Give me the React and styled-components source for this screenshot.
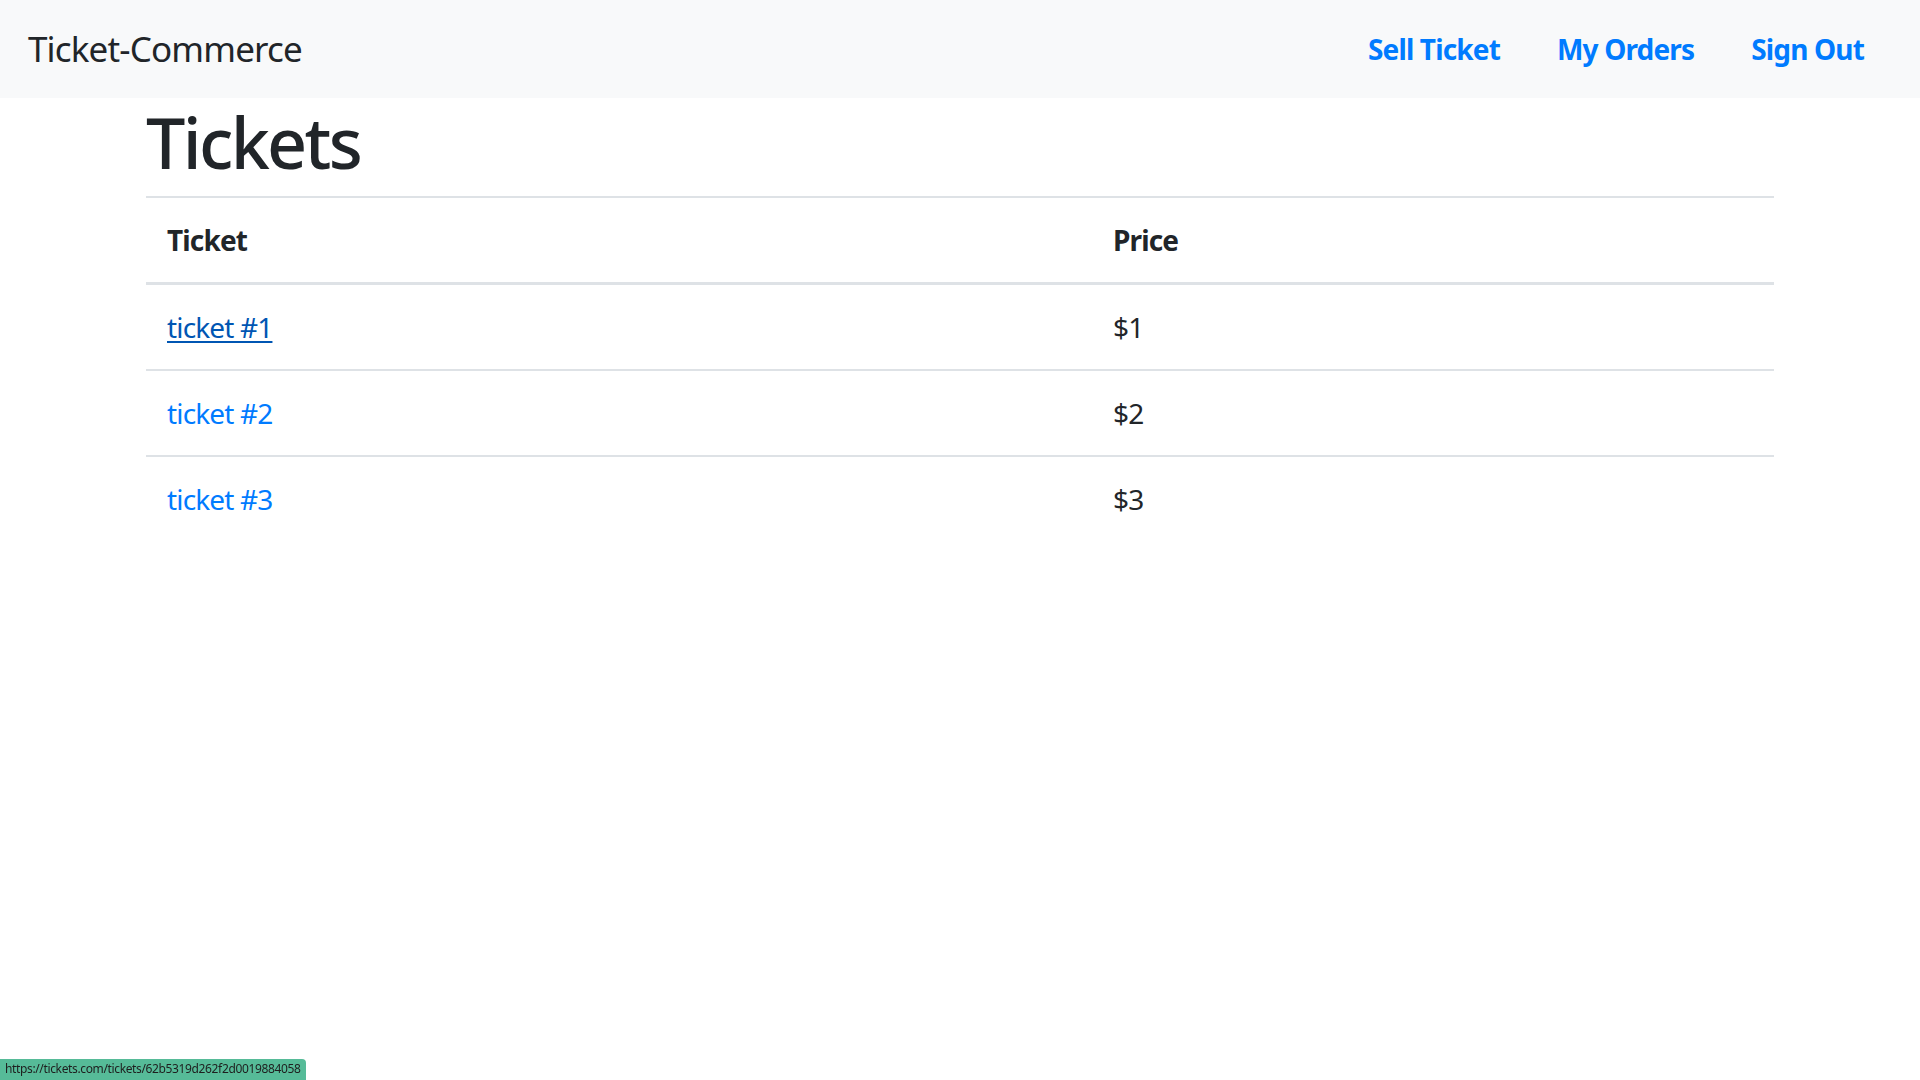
import React from "react";
import styled, { createGlobalStyle } from "styled-components";

const GlobalStyle = createGlobalStyle`
  html, body {
    margin: 0;
    padding: 0;
    background: #fff;
  }
  body {
    font-family: "Noto Sans", "Open Sans", Arial, sans-serif;
    color: #212529;
    font-size: 28px;
    line-height: 1.5;
    letter-spacing: -0.03em;
  }
  * {
    box-sizing: border-box;
  }
`;

const Navbar = styled.nav`
  display: flex;
  align-items: center;
  justify-content: space-between;
  height: 98px;
  padding: 0 56px 0 28px;
  background-color: #f8f9fa;
`;

const Brand = styled.a`
  font-size: 35px;
  line-height: 1.5;
  color: #212529;
  text-decoration: none;
`;

const NavLinks = styled.ul`
  display: flex;
  align-items: center;
  gap: 57px;
  margin: 0;
  padding: 0;
  list-style: none;
`;

const NavLink = styled.a`
  font-size: 28px;
  font-weight: 700;
  color: #007bff;
  text-decoration: none;
`;

const Container = styled.main`
  width: 1680px;
  margin: 0 auto;
  padding: 0 26px;
`;

const Heading = styled.h1`
  margin: 0 0 12px;
  padding-top: 2px;
  font-size: 70px;
  font-weight: 500;
  line-height: 1.2;
  letter-spacing: -0.038em;
`;

const Table = styled.table`
  width: 100%;
  border-collapse: collapse;
  th,
  td {
    padding: 21px;
    text-align: left;
    vertical-align: top;
    border-top: 2px solid #dee2e6;
  }
  thead th {
    font-weight: 700;
    border-bottom: 3px solid #dee2e6;
  }
  th:first-child {
    width: 946px;
  }
`;

const TicketLink = styled.a`
  color: ${(p) => (p.$hover ? "#0056b3" : "#007bff")};
  text-decoration: ${(p) => (p.$hover ? "underline" : "none")};
  text-underline-offset: 3px;
`;

const StatusBar = styled.div`
  position: fixed;
  left: 0;
  bottom: 0;
  padding: 2px 6px 3px 5px;
  font-family: "Noto Sans", Arial, sans-serif;
  font-size: 12px;
  line-height: 16px;
  letter-spacing: -0.03em;
  color: #1e1e1e;
  background: #56bb98;
  border-top-right-radius: 4px;
`;

const tickets = [
  { id: "62b5319d262f2d0019884058", title: "ticket #1", price: 1 },
  { id: "62b5319d262f2d0019884059", title: "ticket #2", price: 2 },
  { id: "62b5319d262f2d001988405a", title: "ticket #3", price: 3 },
];

const App = () => {
  return (
    <>
      <GlobalStyle />
      <Navbar>
        <Brand href="#">Ticket-Commerce</Brand>
        <NavLinks>
          <li>
            <NavLink href="#">Sell Ticket</NavLink>
          </li>
          <li>
            <NavLink href="#">My Orders</NavLink>
          </li>
          <li>
            <NavLink href="#">Sign Out</NavLink>
          </li>
        </NavLinks>
      </Navbar>
      <Container>
        <Heading>Tickets</Heading>
        <Table>
          <thead>
            <tr>
              <th>Ticket</th>
              <th>Price</th>
            </tr>
          </thead>
          <tbody>
            {tickets.map((ticket, i) => (
              <tr key={ticket.id}>
                <td>
                  <TicketLink href="#" $hover={i === 0}>
                    {ticket.title}
                  </TicketLink>
                </td>
                <td>${ticket.price}</td>
              </tr>
            ))}
          </tbody>
        </Table>
      </Container>
      <StatusBar>https://tickets.com/tickets/{tickets[0].id}</StatusBar>
    </>
  );
};

export default App;
